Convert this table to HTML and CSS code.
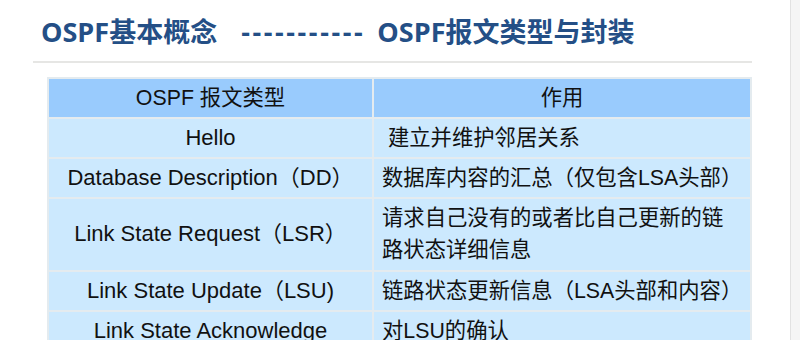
FILE: index.html
```html
<!DOCTYPE html>
<html lang="zh">
<head>
<meta charset="utf-8">
<link rel="stylesheet" href="styles.css">
</head>
<body>
<div class="page">
  <main class="slide">
    <h1 class="title"><span>OSPF基本概念</span><span class="dash">-----------</span><span>OSPF报文类型与封装</span></h1>
    <div class="rule"></div>
    <table class="grid">
      <colgroup><col class="c1"><col class="c2"></colgroup>
      <thead>
        <tr><th>OSPF 报文类型</th><th>作用</th></tr>
      </thead>
      <tbody>
        <tr><td class="name">Hello</td><td class="desc">&nbsp;建立并维护邻居关系</td></tr>
        <tr><td class="name">Database Description（DD）</td><td class="desc">数据库内容的汇总（仅包含LSA头部）</td></tr>
        <tr class="tall"><td class="name">Link State Request（LSR）</td><td class="desc">请求自己没有的或者比自己更新的链<br>路状态详细信息</td></tr>
        <tr><td class="name">Link State Update（LSU)</td><td class="desc">链路状态更新信息（LSA头部和内容）</td></tr>
        <tr><td class="name">Link State Acknowledge</td><td class="desc">对LSU的确认</td></tr>
      </tbody>
    </table>
  </main>
  <aside class="strip"></aside>
</div>
</body>
</html>
```
FILE: styles.css
```css
html, body {
  margin: 0;
  padding: 0;
  background: #ffffff;
  overflow: hidden;
}
.page {
  display: flex;
  width: 800px;
  height: 340px;
}
.slide {
  width: 790px;
  flex: none;
}
.strip {
  flex: 1;
  background: #f5f5f5;
  border-left: 1px solid #e2e2e2;
}
.title {
  display: flex;
  align-items: baseline;
  margin: 0;
  padding: 18px 0 0 41px;
  height: 45px;
  box-sizing: border-box;
  font-family: "Open Sans", "Noto Sans CJK SC", sans-serif;
  font-weight: 700;
  font-size: 27px;
  line-height: 27px;
  color: #244f86;
  white-space: nowrap;
}
.title .dash {
  margin: 0 12px 0 24px;
  letter-spacing: 2.6px;
}
.rule {
  margin: 16px 0 0 33px;
  width: 719px;
  height: 2px;
  background: #e6e6e4;
}
.grid {
  margin: 14px 0 0 47px;
  width: 703px;
  border-collapse: collapse;
  table-layout: fixed;
  font-family: "Liberation Sans", "Noto Sans CJK SC", sans-serif;
  font-size: 21.33px;
  color: #111111;
}
.c1 { width: 325px; }
.c2 { width: 378px; }
.grid th, .grid td {
  border: 2px solid #e4ebef;
  line-height: 32px;
  padding: 3px 8px;
  font-weight: 400;
  vertical-align: middle;
}
.grid th {
  background: #99cbfd;
  text-align: center;
}
.grid td {
  background: #cce9fe;
}
.grid td.name {
  text-align: center;
  font-size: 22px;
  padding-left: 4px;
  padding-right: 4px;
}
.grid tr.tall td {
  padding-bottom: 4px;
}
.grid td.desc {
  text-align: left;
  padding-left: 8px;
  padding-right: 4px;
  white-space: nowrap;
}
```
